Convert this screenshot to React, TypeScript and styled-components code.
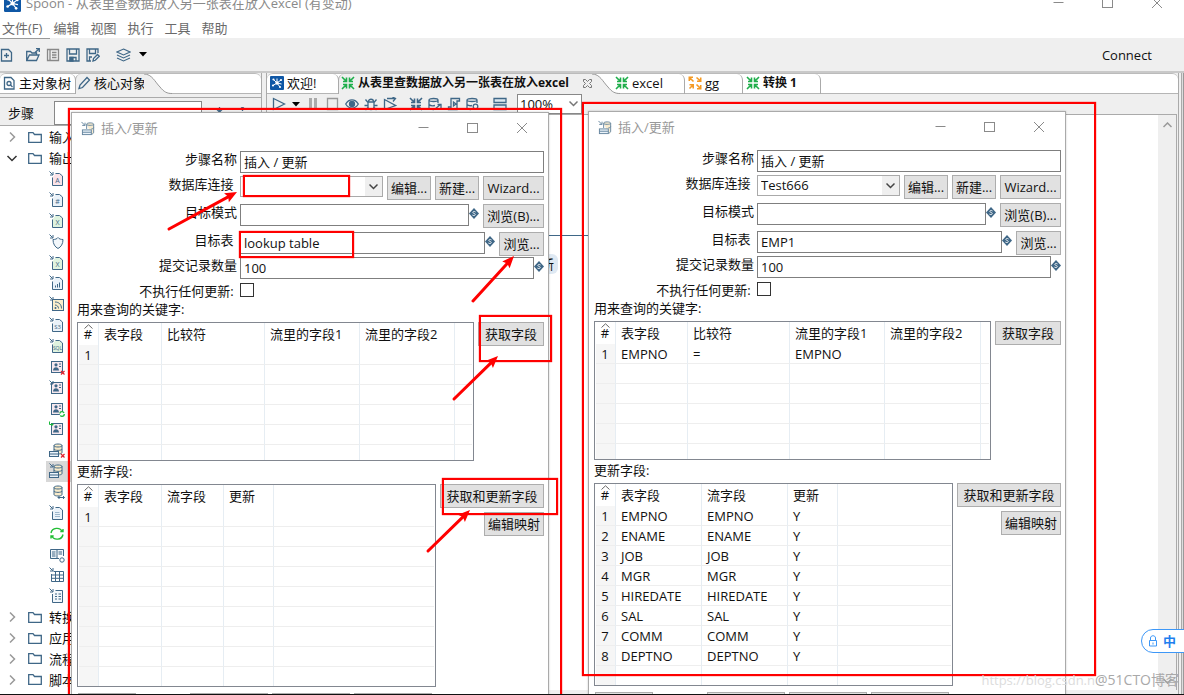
import React from "react";
import styled, { createGlobalStyle, css } from "styled-components";

const INK = "#3f6787";
const FACE = "#efefef";
const RED = "#ff0000";

const Global = createGlobalStyle`
  * { box-sizing: border-box; }
  body {
    margin: 0;
    background: #fff;
    font-family: "Open Sans", "Noto Sans CJK SC", sans-serif;
    font-size: 13px;
    line-height: 18px;
    color: #111;
  }
  button, input, select { font: inherit; color: inherit; }
  svg { display: block; flex: none; }
`;

/* ---------- application frame ---------- */

const Desktop = styled.div`
  position: relative;
  display: flex;
  flex-direction: column;
  height: 100vh;
  overflow: hidden;
  background: ${FACE};
  border-bottom: 1px solid #111;
  white-space: nowrap;
`;

const TitleBar = styled.header`
  display: flex;
  align-items: center;
  flex: none;
  height: 18px;
  margin-top: -6px;
  padding: 0 21px 0 4px;
  gap: 5px;
  background: #fff;
  color: #8a8a8a;
`;

const Grow = styled.span`
  flex: 1;
  min-width: 0;
`;

const Controls = styled.div`
  display: flex;
  gap: 37px;
`;

const ControlButton = styled.button`
  display: flex;
  padding: 0;
  border: 0;
  background: none;
  color: #8a8a8a;
`;

const MenuBar = styled.nav`
  display: flex;
  flex: none;
  gap: 11px;
  height: 26px;
  padding: 7px 2px 0;
  background: #fff;
`;

const MenuItem = styled.button`
  height: 18px;
  padding: 0;
  border: 0;
  background: none;
  color: #6a6a6a;
`;

const Toolbar = styled.div`
  display: flex;
  align-items: center;
  flex: none;
  height: 33px;
  padding-right: 32px;
  gap: 6px;
`;

const ToolButton = styled.button<{ $gap?: number }>`
  display: flex;
  padding: 0;
  margin-left: ${(p) => p.$gap ?? 0}px;
  border: 0;
  background: none;
`;

const MenuRule = styled.div`
  width: 50px;
  height: 1px;
  margin-bottom: -1px;
  flex: none;
  background: #999;
`;

const Workspace = styled.main`
  display: flex;
  flex: 1;
  min-height: 0;
  gap: 4px;
  border-top: 2px solid #c9c9c9;
`;

const SidePane = styled.section`
  display: flex;
  flex-direction: column;
  flex: none;
  width: 262px;
  border-right: 1px solid #aaa;
`;

const EditorPane = styled.section`
  display: flex;
  flex-direction: column;
  flex: 1;
  min-width: 0;
  border-left: 1px solid #aaa;
  border-right: 1px solid #aaa;
`;

const EdgeStrip = styled.div`
  width: 3px;
  margin-left: -2px;
  border-left: 1px solid #aaa;
  border-right: 1px solid #999;
  background: #ddd;
`;

const TabStrip = styled.div`
  display: flex;
  flex: none;
  height: 21px;
  background: #fff;
  border-top: 1px solid #bbb;
  border-radius: 6px 6px 0 0;
  box-shadow: inset 0 -1px #b5b5b5;
`;

const Tab = styled.button<{ $active?: boolean; $bold?: boolean; $w?: number }>`
  display: flex;
  align-items: center;
  flex: none;
  gap: 3px;
  width: ${(p) => (p.$w ? `${p.$w}px` : "auto")};
  padding: 0 0 2px 3px;
  border: 0;
  border-right: 1px solid #aaa;
  border-radius: 0 6px 0 0;
  background: none;
  font-weight: ${(p) => (p.$bold ? 700 : 400)};
  font-size: ${(p) => (p.$bold ? 12 : 13)}px;
  ${(p) =>
    p.$active &&
    css`
      background: ${FACE};
      border-right: 0;
      border-left: 1px solid #aaa;
      border-radius: 6px 0 0 0;
      margin-left: -1px;
      padding-left: 2px;
    `}
`;

const TabText = styled.span`
  flex: 1;
  text-align: left;
`;

const StepFilter = styled.div`
  display: flex;
  align-items: center;
  flex: none;
  height: 29px;
  margin-top: 3px;
  padding: 3px 0 0 8px;
  border-top: 1px solid #aaa;
  border-bottom: 1px solid #aaa;
  label { width: 46px; }
  input {
    width: 148px;
    height: 24px;
    border: 1px solid #888;
    background: #fff;
  }
  svg { margin-left: 12px; }
`;

const Tree = styled.ul`
  display: flex;
  flex-direction: column;
  flex: 1;
  min-height: 0;
  margin: 0;
  padding: 1px 0 4px;
  list-style: none;
  background: #fff;
`;

const TreeRow = styled.li<{ $child?: boolean; $selected?: boolean }>`
  display: flex;
  align-items: center;
  flex: 1 1 0;
  min-height: 0;
  gap: ${(p) => (p.$child ? 4 : 7)}px;
  margin-left: ${(p) => (p.$child ? 46 : 0)}px;
  padding-left: ${(p) => (p.$child ? 3 : 6)}px;
  background: ${(p) => (p.$selected ? "#d8d8d8" : "transparent")};
  svg + svg { margin-left: 3px; }
`;

const RunBar = styled.div`
  display: flex;
  align-items: center;
  flex: none;
  height: 20px;
  padding-left: 5px;
`;

const ZoomBox = styled.div`
  position: relative;
  width: 65px;
  height: 20px;
  margin-left: 10px;
  select {
    width: 100%;
    height: 20px;
    padding: 0 0 0 2px;
    border: 1px solid #888;
    background: #fff;
    appearance: none;
    line-height: 16px;
  }
  svg { position: absolute; right: 4px; top: 5px; pointer-events: none; }
`;

const CanvasArea = styled.div`
  display: flex;
  flex: 1;
  min-height: 0;
  position: relative;
  background: #fff;
  border-top: 1px solid #aaa;
  border-right: 1px solid #aaa;
  margin-right: 1px;
`;

const Scroll = styled.div`
  display: flex;
  flex-direction: column;
  align-items: center;
  justify-content: space-between;
  width: 18px;
  margin-left: auto;
  padding: 7px 0 6px;
  background: ${FACE};
`;

const HopLine = styled.div`
  position: absolute;
  left: 270px;
  top: 120px;
  width: 60px;
  height: 1px;
  background: ${INK};
`;

const NodeLabel = styled.div`
  position: absolute;
  left: 270px;
  top: 139px;
  padding: 1px 4px;
  border-radius: 6px;
  background: #dfe9f3;
`;

const HScroll = styled.div`
  flex: none;
  height: 4px;
  background: ${FACE};
`;

/* ---------- dialog ---------- */

const DialogWindow = styled.section<{ $x: number; $y: number }>`
  position: absolute;
  left: ${(p) => p.$x}px;
  top: ${(p) => p.$y}px;
  width: 478px;
  height: 620px;
  border: 1px solid #aaa;
  background: #fff;
  box-shadow: 0 0 2px rgba(0, 0, 0, 0.2);
`;

const DialogTitle = styled.header`
  display: flex;
  align-items: center;
  gap: 5px;
  height: 30px;
  margin-bottom: 8px;
  padding: 0 20px 0 9px;
  color: #999;
`;

const Field = styled.div<{ $h: number }>`
  display: flex;
  align-items: flex-start;
  height: ${(p) => p.$h}px;
  padding-right: 4px;
`;

const FieldLabel = styled.label`
  width: 168px;
  padding-right: 3px;
  line-height: 16px;
  text-align: right;
  white-space: pre;
`;

const TextInput = styled.input`
  flex: 1;
  min-width: 0;
  height: 22px;
  padding: 0 3px 1px;
  border: 1px solid #7f7f7f;
  background: #fff;
  outline: 0;
`;

const Combo = styled.div`
  position: relative;
  flex: 1;
  height: 21px;
  select {
    width: 100%;
    height: 21px;
    padding: 0 3px 1px;
    border: 1px solid #aaa;
    background: linear-gradient(to left, ${FACE} 17px, #fff 17px);
    appearance: none;
  }
  svg { position: absolute; right: 5px; top: 6px; pointer-events: none; }
`;

const PushButton = styled.button<{ $w: number }>`
  flex: none;
  width: ${(p) => p.$w}px;
  height: 24px;
  margin-left: 4px;
  padding: 0 0 1px;
  border: 1px solid #adadad;
  background: #e1e1e1;
  text-align: center;
`;

const Check = styled.input`
  appearance: none;
  width: 14px;
  height: 14px;
  margin: 0;
  border: 1px solid #333;
  background: #fff;
`;

const Section = styled.div`
  padding: 0 4px 0 5px;
`;

const SectionTitle = styled.div`
  height: 21px;
  line-height: 16px;
`;

const SectionBody = styled.div`
  display: flex;
  align-items: flex-start;
  margin-bottom: 2px;
`;

const ButtonColumn = styled.div`
  display: flex;
  flex-direction: column;
  align-items: flex-end;
  gap: 4px;
`;

const GridBox = styled.div<{ $h: number }>`
  flex: 1;
  min-width: 0;
  height: ${(p) => p.$h}px;
  padding: 0 1px;
  border: 1px solid #828790;
  overflow: hidden;
`;

const DataTable = styled.table`
  width: 100%;
  border-collapse: separate;
  border-spacing: 0;
  table-layout: fixed;
  th, td {
    height: 20px;
    padding: 0 0 0 5px;
    border-right: 1px solid #e6edf3;
    border-bottom: 1px solid #eeeeee;
    text-align: left;
    font-weight: 400;
    line-height: 18px;
    overflow: hidden;
  }
  th { position: relative; height: 22px; border-bottom: 0; }
  th:first-child, td:first-child { padding: 0 1px 0 0; text-align: center; }
  td:first-child { background: #f6f6f6; }
  th:last-child, td:last-child { border-right: 0; }
  tr:last-child td { border-bottom: 0; }
`;

const SortMark = styled.svg`
  position: absolute;
  left: 5px;
  top: 1px;
`;

const Footer = styled.div`
  display: flex;
  padding: 4px 0 0 1px;
`;

const FooterButton = styled(PushButton)<{ $after?: number }>`
  margin-left: ${(p) => (p.$after === undefined ? 4 : 0)}px;
  margin-right: ${(p) => p.$after ?? 0}px;
`;

/* ---------- annotations ---------- */

const Frame = styled.div<{ $x: number; $y: number; $w: number; $h: number }>`
  position: absolute;
  left: ${(p) => p.$x}px;
  top: ${(p) => p.$y}px;
  width: ${(p) => p.$w}px;
  height: ${(p) => p.$h}px;
  border: 2px solid ${RED};
  box-shadow: 0 0 1px ${RED};
  pointer-events: none;
`;

const ArrowLayer = styled.svg`
  position: absolute;
  left: 0;
  top: 0;
  pointer-events: none;
`;

const Watermark = styled.div`
  position: absolute;
  right: 5px;
  bottom: 5px;
  display: flex;
  color: #a9a9a9;
  font-size: 14px;
  span { color: #dcdcdc; font-size: 13px; }
`;

const ImePill = styled.div`
  position: absolute;
  right: -8px;
  top: 629px;
  display: flex;
  align-items: center;
  gap: 5px;
  width: 51px;
  height: 24px;
  padding-left: 6px;
  border: 1px solid #3d97f7;
  border-radius: 12px 0 0 12px;
  background: #fff;
  color: #1f7fee;
  font-weight: 700;
`;

/* ---------- icons ---------- */

const Svg = ({ w = 14, h = 14, children }: { w?: number; h?: number; children: React.ReactNode }) => (
  <svg width={w} height={h} viewBox={`0 0 ${w} ${h}`} fill="none" stroke={INK} strokeWidth="1.3">
    {children}
  </svg>
);

const SpoonLogo = ({ size = 14 }: { size?: number }) => (
  <svg width={size} height={size} viewBox="0 0 14 14">
    <rect width="14" height="14" rx="1" fill="#0f57a5" />
    <g stroke="#fff" strokeWidth="1">
      <path d="M7 7L3.5 3.5M7 7L11 4M7 7L3 9.500M7 7L10 11M7 7L7 2.500M7 7L11.500 8" />
    </g>
    <g fill="#fff">
      <circle cx="7" cy="7" r="1.700" />
      <circle cx="3.500" cy="3.500" r="1.100" />
      <circle cx="11" cy="4" r="1.100" />
      <circle cx="3" cy="9.500" r="1.100" />
      <circle cx="10" cy="11" r="1.100" />
    </g>
  </svg>
);

const TransIcon = ({ color = "#1fae4b" }: { color?: string }) => (
  <svg width="14" height="14" viewBox="0 0 14 14" fill="none" stroke={color} strokeWidth="1.6">
    <path d="M1 1L5.500 5.500M2 5.500H5.500V1.500M13 1L8.500 5.500M8.500 1.500V5.500H12M1 13L5.500 8.500M2 8.500H5.500V12.500M13 13L8.500 8.500M12 8.500H8.500V12.500" />
  </svg>
);

const JobIcon = () => (
  <svg width="14" height="14" viewBox="0 0 14 14" fill="none" stroke="#f59a23" strokeWidth="1.600">
    <path d="M5.500 5.500L1.500 1.500M1.300 5V1.300H5M8.500 1.500L12.500 5M12.700 1.500V5.200H9M8.500 8.500L12.500 12.500M9 12.700H12.700V9M5.500 8.500L1.500 12.500M1.500 8.800H5.200V12.500" />
  </svg>
);

const Minimize = () => (
  <svg width="12" height="12" viewBox="0 0 12 12" stroke="currentColor"><path d="M0.500 5.500H10.500" /></svg>
);
const Maximize = () => (
  <svg width="12" height="12" viewBox="0 0 12 12" fill="none" stroke="currentColor"><rect x="0.500" y="1.500" width="10" height="9" /></svg>
);
const Close = () => (
  <svg width="12" height="12" viewBox="0 0 12 12" stroke="currentColor"><path d="M1 1L11 11M11 1L1 11" /></svg>
);
const Chevron = ({ color = "#444" }: { color?: string }) => (
  <svg width="9" height="9" viewBox="0 0 9 9" fill="none" stroke={color} strokeWidth="1.500"><path d="M0.500 2.500L4.500 6.500L8.500 2.500" /></svg>
);
const Caret = () => (
  <svg width="8" height="5" viewBox="0 0 8 5"><path d="M0 0H8L4 4.500Z" fill="#000" /></svg>
);

const VarIcon = () => (
  <svg width="10" height="19" viewBox="0 0 10 19">
    <path d="M5 4L10 9.500L5 15L0 9.500Z" fill={INK} />
    <path d="M6.600 8C5.800 7.200 3.700 7.300 3.800 8.500C3.900 9.700 6.400 9.200 6.300 10.600C6.200 11.800 4 11.800 3.300 11" fill="none" stroke="#fff" strokeWidth="0.8" />
  </svg>
);

const UpsertIcon = () => (
  <svg width="15" height="15" viewBox="0 0 16 16" fill="none" stroke={INK} opacity="0.8">
    <path d="M6 3.500C6 1.500 13.500 1.500 13.500 3.500V12C13.500 13.500 12 14 11 14" fill="#f7e7c4" />
    <path d="M6 3.500C6 5 13.500 5 13.500 3.500M6 3.500V8.500M11 8.500C12 8.400 13.500 8 13.500 7" />
    <rect x="1.500" y="9.500" width="9.500" height="5" fill="#e5eff8" />
    <path d="M1.500 12H11M0.500 1L4 4.500M4.300 1.800V4.700H1.300" />
  </svg>
);

const Folder = () => (
  <Svg w={14} h={13}><path d="M0.700 11.300V1.700H5L6.500 3.500H13.300V11.300Z" /></Svg>
);

const DocBase = ({ fill = "#eaf2f9", label, size = 7 }: { fill?: string; label?: string; size?: number }) => (
  <>
    <path d="M3.500 6.500V14.500H13.500V5L10.500 2.500H6.500" fill={fill} />
    {label && (
      <text x="8.500" y="12" textAnchor="middle" fontSize={size} fill={INK} stroke="none">{label}</text>
    )}
  </>
);
const ArrowIn = ({ color = INK }: { color?: string }) => (
  <path d="M0.500 0.500L3.700 3.700M4 1V4H1" stroke={color} />
);
const RedX = () => <path d="M12 12L15.500 15.500M15.500 12L12 15.500" stroke="#e0202c" strokeWidth="1.200" />;
const Card = () => (
  <>
    <rect x="2.500" y="2.500" width="11" height="11" fill="#f6e8ee" />
    <circle cx="7" cy="5.800" r="1.600" fill={INK} stroke="none" />
    <path d="M4 11.500C4 7 10 7 10 11.500Z" fill={INK} stroke="none" />
    <path d="M10 5H12M10 7.500H12" />
  </>
);
const Drum = () => (
  <>
    <path d="M5 3.500C5 1.500 13 1.500 13 3.500V10.500C13 12.500 5 12.500 5 10.500Z" fill="#f9ebca" />
    <path d="M5 3.500C5 5.500 13 5.500 13 3.500M5 7C5 8.800 13 8.800 13 7" />
  </>
);
const TableSlip = () => (
  <>
    <rect x="0.500" y="9.500" width="9" height="5" fill="#eaf2f9" />
    <path d="M0.500 12H9.500" />
  </>
);

const stepArt: React.ReactNode[] = [
  <><DocBase fill="#fbe3e8" label="A" /><ArrowIn /></>,
  <><DocBase label="#" /><ArrowIn /></>,
  <><DocBase fill="#dff3df" label="X" /><ArrowIn /></>,
  <><path d="M4 5.500C6 5.500 8 5 9 3.500C10 5 12 5.500 14 5.500C14 10 12 13 9 14.500C6 13 4 10 4 5.500Z" fill="#f2f7fb" /><ArrowIn /></>,
  <><DocBase fill="#dff3df" label="X" /><ArrowIn /></>,
  <><DocBase /><path d="M6.500 12.500V10.500M8.500 12.500V9M10.500 12.500V7.500" /><ArrowIn /></>,
  <><rect x="3.500" y="3.500" width="11" height="11" fill="#fbeecb" /><path d="M6 6C10 6 12.500 8.500 12.500 12.500M6 9C8 9 9.500 10.500 9.500 12.500" /><circle cx="6.500" cy="12" r="1" fill={INK} stroke="none" /><ArrowIn /></>,
  <><DocBase label="S3" size={6} /><ArrowIn /></>,
  <><DocBase fill="#dff3df" label="SQL" size={5} /><ArrowIn /></>,
  <><Card /><RedX /></>,
  <><Card /><ArrowIn /></>,
  <><Card /><circle cx="13" cy="13" r="2.300" fill="#fff" stroke="#18b83a" strokeWidth="1.300" strokeDasharray="5 2" /></>,
  <><Card /><path d="M0.500 0.500V3.500H4M2.500 2L4 3.500L2.500 5" stroke="#18b83a" /></>,
  <><Drum /><TableSlip /><RedX /></>,
  <><Drum /><TableSlip /><ArrowIn /></>,
  <><Drum /><path d="M9 13.500H15.500M10.500 12L9 13.500L10.500 15M14 12L15.500 13.500L14 15" /></>,
  <><DocBase /><path d="M6 7.500H10.500M6 9.500H11M6 11.500H11" stroke="#9cb6cb" /><ArrowIn /></>,
  <path d="M2 7C3 1.500 11 0.500 13.500 6M14 8.500C13 14 5 15 2.500 9.500M11.300 5.500H14V3M4.700 10H2V12.500" stroke="#22bd35" strokeWidth="1.400" />,
  <><path d="M1.500 2.500H14.500V9M1.500 2.500V11.500H10M8 2.500V11.500M3 5H6.500M3 7H6.500M3 9H6.500M9.500 5H13M9.500 7H13" fill="#eef4f9" /><circle cx="13" cy="13" r="2.200" fill="#fff" /></>,
  <><path d="M4.500 4.500H14.500V14.500H2.500V7M2.500 8H14.500M2.500 11.300H14.500M6.500 5V14.500M10.500 4.500V14.500" /><ArrowIn /></>,
  <><path d="M6.500 2.500H13.500V14.500H3.500V6" fill="#f2f7fb" /><path d="M6 6H8M6 8.500H8M6 11H8M9.500 6H12M9.500 8.500H12M9.500 11H12" /><ArrowIn /></>,
];

const StepIcon = ({ index }: { index: number }) => (
  <svg width="16" height="16" viewBox="0 0 16 16" fill="none" stroke={INK}>{stepArt[index]}</svg>
);

/* ---------- parts ---------- */

const WindowControls = () => (
  <Controls>
    <ControlButton aria-label="最小化"><Minimize /></ControlButton>
    <ControlButton aria-label="最大化"><Maximize /></ControlButton>
    <ControlButton aria-label="关闭"><Close /></ControlButton>
  </Controls>
);

const CurveSvg = styled.svg`
  margin-right: -10px;
`;

const Curve = () => (
  <CurveSvg width="30" height="20" viewBox="0 0 30 20">
    <path d="M0 0C8 0 11 8 16 13C20 18 23 19.500 28 19.500V20H0Z" fill={FACE} />
    <path d="M0 0C8 0 11 8 16 13C20 18 23 19.500 28 19.500" fill="none" stroke="#999" />
  </CurveSvg>
);

const Grid = ({ height, widths, heads, rows, blank }: {
  height: number; widths: number[]; heads: string[]; rows: string[][]; blank: number;
}) => {
  const all = [...rows, ...Array.from({ length: blank }, () => [] as string[])];
  return (
    <GridBox $h={height}>
      <DataTable>
        <colgroup>
          {[20, ...widths].map((w, i) => <col key={i} width={w} />)}
          <col />
        </colgroup>
        <thead>
          <tr>
            <th>
              <SortMark width="9" height="5" viewBox="0 0 9 5" fill="none" stroke="#666"><path d="M0.500 4.500L4.500 0.800L8.500 4.500" /></SortMark>
              #
            </th>
            {heads.map((h) => <th key={h}>{h}</th>)}
            <th />
          </tr>
        </thead>
        <tbody>
          {all.map((r, i) => (
            <tr key={i}>
              {Array.from({ length: heads.length + 2 }, (_, c) => <td key={c}>{r[c] ?? ""}</td>)}
            </tr>
          ))}
        </tbody>
      </DataTable>
    </GridBox>
  );
};

type DialogProps = {
  id: string; x: number; y: number; connection: string; table: string;
  keyWidths: number[]; keyRows: string[][];
  updateWidths: number[]; updateRows: string[][];
};

const UpsertDialog = (p: DialogProps) => (
  <DialogWindow $x={p.x} $y={p.y} aria-label="插入/更新">
    <DialogTitle>
      <UpsertIcon />
      <Grow>插入/更新</Grow>
      <WindowControls />
    </DialogTitle>
    <Field $h={25}>
      <FieldLabel htmlFor={`${p.id}-name`}>步骤名称</FieldLabel>
      <TextInput id={`${p.id}-name`} defaultValue="插入 / 更新" />
    </Field>
    <Field $h={28}>
      <FieldLabel htmlFor={`${p.id}-conn`}>{"数据库连接 "}</FieldLabel>
      <Combo>
        <select id={`${p.id}-conn`} defaultValue={p.connection}><option>{p.connection}</option></select>
        <Chevron />
      </Combo>
      <PushButton $w={44}>编辑...</PushButton>
      <PushButton $w={44}>新建...</PushButton>
      <PushButton $w={61}>Wizard...</PushButton>
    </Field>
    <Field $h={28}>
      <FieldLabel htmlFor={`${p.id}-schema`}>目标模式</FieldLabel>
      <TextInput id={`${p.id}-schema`} />
      <VarIcon />
      <PushButton $w={61}>浏览(B)...</PushButton>
    </Field>
    <Field $h={25}>
      <FieldLabel htmlFor={`${p.id}-table`}>{"目标表 "}</FieldLabel>
      <TextInput id={`${p.id}-table`} defaultValue={p.table} />
      <VarIcon />
      <PushButton $w={45}>浏览...</PushButton>
    </Field>
    <Field $h={26}>
      <FieldLabel htmlFor={`${p.id}-commit`}>提交记录数量</FieldLabel>
      <TextInput id={`${p.id}-commit`} defaultValue="100" />
      <VarIcon />
    </Field>
    <Field $h={18}>
      <FieldLabel htmlFor={`${p.id}-skip`}>{"不执行任何更新: "}</FieldLabel>
      <Check type="checkbox" id={`${p.id}-skip`} />
    </Field>
    <Section>
      <SectionTitle>用来查询的关键字:</SectionTitle>
      <SectionBody>
        <Grid height={139} widths={p.keyWidths} heads={["表字段", "比较符", "流里的字段1", "流里的字段2"]} rows={p.keyRows} blank={5} />
        <ButtonColumn><PushButton $w={66}>获取字段</PushButton></ButtonColumn>
      </SectionBody>
      <SectionTitle>更新字段:</SectionTitle>
      <SectionBody>
        <Grid height={203} widths={p.updateWidths} heads={["表字段", "流字段", "更新"]} rows={p.updateRows} blank={9 - p.updateRows.length} />
        <ButtonColumn>
          <PushButton $w={104}>获取和更新字段</PushButton>
          <PushButton $w={60}>编辑映射</PushButton>
        </ButtonColumn>
      </SectionBody>
      <Footer>
        <FooterButton $w={58} $after={50} aria-label="确定" />
        <FooterButton $w={78} aria-label="取消" />
        <FooterButton $w={78} aria-label="SQL" />
        <FooterButton $w={78} aria-label="帮助" />
      </Footer>
    </Section>
  </DialogWindow>
);

const arrows = [
  [169, 229, 237, 192],
  [473, 301, 514, 256],
  [454, 399, 498, 356],
  [428, 551, 470, 510],
];

const Arrow = ({ x1, y1, x2, y2 }: { x1: number; y1: number; x2: number; y2: number }) => {
  const angle = (Math.atan2(y2 - y1, x2 - x1) * 180) / Math.PI;
  const length = Math.hypot(x2 - x1, y2 - y1);
  return (
    <g transform={`translate(${x1} ${y1}) rotate(${angle})`}>
      <path d={`M0 0H${length - 8}`} stroke={RED} strokeWidth="3" strokeLinecap="round" />
      <path d={`M${length} 0L${length - 12} -5L${length - 10} 0L${length - 12} 5Z`} fill={RED} />
    </g>
  );
};

const branch = (text: string, open = false) => (
  <TreeRow key={text}>
    <svg width="12" height="12" viewBox="0 0 12 12" fill="none" stroke={open ? "#333" : "#999"} strokeWidth="1.500">
      {open ? <path d="M1.500 4L6 8.500L10.500 4" /> : <path d="M4 1.500L8.500 6L4 10.500" />}
    </svg>
    <Folder />
    {text}
  </TreeRow>
);

const updateRows = ["EMPNO", "ENAME", "JOB", "MGR", "HIREDATE", "SAL", "COMM", "DEPTNO"].map((n, i) => [String(i + 1), n, n, "Y"]);

export default function App() {
  return (
    <Desktop>
      <Global />
      <TitleBar>
        <SpoonLogo size={17} />
        <Grow>Spoon - 从表里查数据放入另一张表在放入excel (有变动)</Grow>
        <WindowControls />
      </TitleBar>
      <MenuBar>
        {["文件(F)", "编辑", "视图", "执行", "工具", "帮助"].map((m) => <MenuItem key={m}>{m}</MenuItem>)}
      </MenuBar>
      <MenuRule />
      <Toolbar>
        <ToolButton aria-label="新建"><Svg w={13}><path d="M1.500 1.500H8.500L11.500 4.500V13H1.500ZM4 7.500H9M6.500 5V10" /></Svg></ToolButton>
        <ToolButton $gap={7} aria-label="打开"><Svg><path d="M0.700 12.500V3.500H4.500L6 5H10.500V7M0.700 12.500L3.500 7H13L10.500 12.500ZM9 4.500L13 1M10 0.700H13.300V4" /></Svg></ToolButton>
        <ToolButton aria-label="浏览"><svg width="14" height="14" viewBox="0 0 14 14" fill="none" stroke="#888" strokeWidth="1.300"><path d="M1.500 1.500H12.500V12.500H1.500ZM4 1.500V12.500M6 4.500H10.500M6 7H10.500M6 9.500H10.500" /></svg></ToolButton>
        <ToolButton aria-label="保存"><Svg><path d="M1 1H13V13H1ZM3.500 1V6H10.500V1M4 13V9.500H10V13" /><path d="M4 9.500H7V13H4Z" fill={INK} /></Svg></ToolButton>
        <ToolButton aria-label="另存为"><Svg><path d="M12 5V1H1V13H5M3.500 1V5.500H9.500V1M3.500 13V9H6M7 13L7.500 10.500L11.500 6.500L13.300 8.300L9.300 12.300Z" /></Svg></ToolButton>
        <ToolButton $gap={10} aria-label="视图"><Svg w={15}><path d="M7.500 1L14 4L7.500 7L1 4ZM1 7L7.500 10L14 7M1 10L7.500 13L14 10" strokeWidth="1.100" /></Svg></ToolButton>
        <ToolButton $gap={2} aria-label="更多"><Caret /></ToolButton>
        <Grow />
        <ToolButton>Connect</ToolButton>
      </Toolbar>
      <Workspace>
        <SidePane>
          <TabStrip>
            <Tab $w={76}>
              <Svg w={13}><path d="M1.500 1.500H8L11 4.500V13H1.500Z" /><circle cx="6" cy="7.500" r="2" /><path d="M7.500 9L9.500 11" /></Svg>
              主对象树
            </Tab>
            <Tab $active $w={69}>
              <Svg w={13}><path d="M1 12.500L2 9L9 1.500L11.500 4L4.500 11.500Z" /></Svg>
              核心对象
            </Tab>
            <Curve />
          </TabStrip>
          <StepFilter>
            <label htmlFor="step-filter">步骤</label>
            <input id="step-filter" />
            <Svg w={11} h={12}><path d="M5.500 0V4M3 2.500L5.500 5L8 2.500M1 7H10" /></Svg>
            <Svg w={11} h={12}><path d="M5.500 4V0M3 2.500L5.500 0L8 2.500M1 7H10" /></Svg>
          </StepFilter>
          <Tree>
            {branch("输入")}
            {branch("输出", true)}
            {stepArt.map((_, i) => (
              <TreeRow key={i} $child $selected={i === 14}><StepIcon index={i} /></TreeRow>
            ))}
            {["转换", "应用", "流程", "脚本"].map((t) => branch(t))}
          </Tree>
        </SidePane>
        <EditorPane>
          <TabStrip>
            <Tab $w={72}><SpoonLogo />欢迎!</Tab>
            <Tab $active $bold $w={254}>
              <TransIcon />
              <TabText>从表里查数据放入另一张表在放入excel</TabText>
              <svg width="9" height="9" viewBox="0 0 9 9" fill="none" stroke="#777"><path d="M0.500 0.500H2.500L4.500 2.500L6.500 0.500H8.500V2.500L6.500 4.500L8.500 6.500V8.500H6.500L4.500 6.500L2.500 8.500H0.500V6.500L2.500 4.500L0.500 2.500Z" /></svg>
            </Tab>
            <Curve />
            <Tab $w={73}><TransIcon />excel</Tab>
            <Tab $w={58}><JobIcon />gg</Tab>
            <Tab $w={78} $bold><TransIcon />转换 1</Tab>
          </TabStrip>
          <RunBar>
            <ToolButton aria-label="运行"><Svg><path d="M1.500 1.500L12.500 7L1.500 12.500Z" /></Svg></ToolButton>
            <ToolButton $gap={6} aria-label="运行选项"><Caret /></ToolButton>
            <ToolButton $gap={8} aria-label="暂停"><svg width="10" height="14" viewBox="0 0 10 14"><path d="M1 1H4V13H1ZM6 1H9V13H6Z" fill="#aaa" /></svg></ToolButton>
            <ToolButton $gap={8} aria-label="停止"><svg width="13" height="14" viewBox="0 0 13 14" fill="none" stroke="#999" strokeWidth="1.300"><path d="M1.500 1.500H11.500V12.500H1.500Z" /></svg></ToolButton>
            <ToolButton $gap={6} aria-label="预览"><Svg><path d="M0.700 7C4 1.500 10 1.500 13.300 7C10 12.500 4 12.500 0.700 7Z" /><circle cx="7" cy="7" r="2.500" fill={INK} /></Svg></ToolButton>
            <ToolButton $gap={5} aria-label="调试"><Svg><path d="M4 5H10V10C10 13.500 4 13.500 4 10ZM4.500 4.500C4.500 1.500 9.500 1.500 9.500 4.500M1.500 2.500L4 5.500M12.500 2.500L10 5.500M0.500 8.500H4M10 8.500H13.500M1.500 13L4 10.500M12.500 13L10 10.500" /></Svg></ToolButton>
            <ToolButton $gap={5} aria-label="重放"><Svg><path d="M1.500 12.500V2.500L12.500 8.500L1.500 12.500M4 1.500H12M9.500 0L12.500 1.500L10 4.500" /></Svg></ToolButton>
            <ToolButton $gap={12} aria-label="校验"><TransIcon color={INK} /></ToolButton>
            <ToolButton $gap={5} aria-label="影响"><Svg><path d="M1 3C1 1 10 1 10 3V6M1 3V11C1 12 4 12.500 6 12.500M1 3C1 5 10 5 10 3M1 7.500C2 8.500 5 9 7 8.500M7 12L12.500 7.500M9.500 7.500H13V11" /></Svg></ToolButton>
            <ToolButton $gap={5} aria-label="SQL"><Svg><path d="M4 11V1.500H12.500V4H10V12.500H1.500V10H4M6.500 5V9L9 7Z" /></Svg></ToolButton>
            <ToolButton $gap={5} aria-label="浏览数据库"><Svg><path d="M1 3C1 1 11 1 11 3V6M1 3V11C1 12 3 12.500 5 12.500M1 3C1 5 11 5 11 3M1 7.500C2 8.500 4 9 6 8.500" /><circle cx="9.500" cy="9.500" r="2.300" /></Svg></ToolButton>
            <ToolButton $gap={13} aria-label="结果"><Svg><path d="M1 1.500H13V5.500H1ZM1 8H13V12.500H1Z" fill="#dbe6ef" /></Svg></ToolButton>
            <ZoomBox>
              <select aria-label="缩放" defaultValue="100%"><option>100%</option></select>
              <Chevron color="#777" />
            </ZoomBox>
          </RunBar>
          <CanvasArea>
            <HopLine />
            <NodeLabel>新</NodeLabel>
            <Scroll>
              <svg width="9" height="6" viewBox="0 0 9 6" fill="none" stroke="#999" strokeWidth="1.500"><path d="M0.500 5L4.500 1L8.500 5" /></svg>
              <svg width="9" height="6" viewBox="0 0 9 6" fill="none" stroke="#999" strokeWidth="1.500"><path d="M0.500 1L4.500 5L8.500 1" /></svg>
            </Scroll>
          </CanvasArea>
          <HScroll />
        </EditorPane>
        <EdgeStrip />
      </Workspace>

      <UpsertDialog
        id="left" x={71} y={112} connection="" table="lookup table"
        keyWidths={[63, 103, 95, 95]} keyRows={[["1"]]}
        updateWidths={[63, 62, 50]} updateRows={[["1"]]}
      />
      <UpsertDialog
        id="right" x={588} y={111} connection="Test666" table="EMP1"
        keyWidths={[72, 102, 95, 96]} keyRows={[["1", "EMPNO", "=", "EMPNO"]]}
        updateWidths={[86, 86, 50]} updateRows={updateRows}
      />

      <Frame $x={68} $y={108} $w={494} $h={620} />
      <Frame $x={582} $y={102} $w={514} $h={574} />
      <Frame $x={243} $y={175} $w={107} $h={22} />
      <Frame $x={239} $y={231} $w={115} $h={27} />
      <Frame $x={479} $y={315} $w={73} $h={47} />
      <Frame $x={442} $y={478} $w={116} $h={37} />
      <ArrowLayer width="600" height="600">
        {arrows.map(([x1, y1, x2, y2]) => <Arrow key={x1} x1={x1} y1={y1} x2={x2} y2={y2} />)}
      </ArrowLayer>
      <Watermark><span>https://blog.csdn.n</span>@51CTO博客</Watermark>
      <ImePill>
        <svg width="10" height="12" viewBox="0 0 10 12" fill="none" stroke="#3d97f7"><path d="M2.500 5.500V3C2.500 0 7.500 0 7.500 3V5.500M1.500 5.500H8.500V11H1.500ZM5 7.500V9.500" /></svg>
        中
      </ImePill>
    </Desktop>
  );
}
